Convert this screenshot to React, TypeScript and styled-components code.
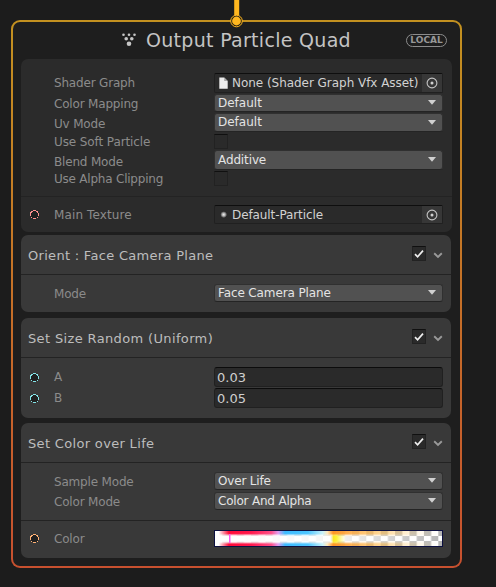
import React from "react";
import styled, { createGlobalStyle } from "styled-components";

const GlobalStyle = createGlobalStyle`
  *, *::before, *::after { box-sizing: border-box; }
  body {
    margin: 0;
    background: #1c1c1c;
    font-family: "DejaVu Sans", Verdana, sans-serif;
    overflow: hidden;
  }
`;

const Canvas = styled.main`
  position: relative;
  width: 496px;
  height: 587px;
  padding: 20px 0 0 11px;
  background: #1c1c1c;
`;

const Node = styled.section`
  width: 451px;
  height: 548px;
  padding: 0 8px;
  border: 2px solid transparent;
  border-radius: 9px;
  background:
    linear-gradient(#1e1e1e, #1e1e1e) padding-box,
    linear-gradient(#c39120, #c7502f) border-box;
`;

const FlowAnchor = styled.svg`
  position: absolute;
  left: 228px;
  top: 0;
`;

const TitleBar = styled.header`
  display: flex;
  align-items: center;
  height: 37px;
  padding: 0 0 1px 100px;
`;

const Title = styled.h1`
  flex: 1;
  margin: 0 0 1px 9px;
  font-size: 19px;
  line-height: 24px;
  font-weight: 400;
  letter-spacing: 0.3px;
  color: #c4c4c4;
  white-space: nowrap;
`;

const SpaceBadge = styled.span`
  width: 41px;
  height: 13px;
  margin-right: 5px;
  border: 1.5px solid #8c8c8c;
  border-radius: 7px;
  font-size: 9px;
  line-height: 11px;
  font-weight: 700;
  text-align: center;
  color: #979797;
`;

const Panel = styled.div<{ $h: number; $gap?: number; $settings?: boolean }>`
  height: ${(p) => p.$h}px;
  width: ${(p) => (p.$settings ? 431 : 430)}px;
  margin-bottom: ${(p) => p.$gap ?? 0}px;
  padding-top: ${(p) => (p.$settings ? 14 : 0)}px;
  border-radius: 7px;
  background: ${(p) => (p.$settings ? "#2b2b2b" : "#393939")};
`;

const BlockHeader = styled.div`
  display: flex;
  align-items: center;
  height: 39px;
  padding: 0 8px 0 7px;
`;

const BlockTitle = styled.h2<{ $ls: number }>`
  flex: 1;
  margin: 2px 0 0;
  font-size: 13px;
  line-height: 18px;
  font-weight: 400;
  letter-spacing: ${(p) => p.$ls}px;
  color: #bdbdbd;
  white-space: nowrap;
`;

const Divider = styled.hr<{ $mt?: number }>`
  height: 1px;
  margin: ${(p) => p.$mt ?? 0}px 0 0;
  border: 0;
  background: #232323;
`;

const Row = styled.div<{ $h: number; $mt?: number }>`
  display: grid;
  grid-template-columns: 33px 160px 229px;
  height: ${(p) => p.$h}px;
  margin-top: ${(p) => p.$mt ?? 0}px;
`;

const PortCell = styled.div`
  display: flex;
  align-items: center;
  padding-left: 8px;
`;

const Label = styled.span<{ $dy?: number; $ls?: number }>`
  align-self: center;
  height: 16px;
  margin-top: ${(p) => (p.$dy ?? 0) * 2}px;
  font-size: 12px;
  line-height: 16px;
  letter-spacing: ${(p) => p.$ls ?? -0.18}px;
  color: #8b8b8b;
  white-space: nowrap;
`;

const Dropdown = styled.div<{ $ls: number }>`
  display: flex;
  align-items: center;
  justify-content: space-between;
  padding: 0 6px 1px 3px;
  border: 1px solid #303030;
  border-bottom-color: #242424;
  border-radius: 3px;
  background: #515151;
  font-size: 12px;
  line-height: 14px;
  letter-spacing: ${(p) => p.$ls}px;
  color: #e4e4e4;
  white-space: nowrap;
`;

const ObjectBox = styled.div<{ $ls: number }>`
  display: flex;
  align-items: center;
  border: 1px solid #202020;
  border-top-color: #0e0e0e;
  border-radius: 2px;
  background: #2a2a2a;
  font-size: 12px;
  letter-spacing: ${(p) => p.$ls}px;
  color: #d2d2d2;
  white-space: nowrap;
  & > svg:first-child { flex: none; margin: 0 4px 0 4px; }
`;

const Picker = styled.span`
  display: flex;
  align-items: center;
  justify-content: center;
  width: 20px;
  height: 100%;
  margin-left: auto;
  background: #373737;
`;

const NumberInput = styled.div`
  padding: 2px 3px 0 2px;
  border: 1px solid #202020;
  border-top-color: #0c0c0c;
  border-radius: 3px;
  background: #2a2a2a;
  font-size: 13px;
  line-height: 16px;
  letter-spacing: 0.05px;
  color: #cfcfcf;
`;

const CheckBox = styled.span<{ $header?: boolean }>`
  display: flex;
  align-items: center;
  justify-content: center;
  width: 14px;
  height: 15px;
  margin-bottom: ${(p) => (p.$header ? 2 : 0)}px;
  border: 1px solid #222;
  border-top-color: #101010;
  background: #2a2a2a;
`;

const Chevron = styled.svg`
  margin-left: 7px;
  margin-top: 2px;
`;

const Port = ({ color }: { color: string }) => (
  <svg width="11" height="11" viewBox="0 0 11 11" shapeRendering="crispEdges">
    <circle cx="5.5" cy="5.5" r="4" fill="#202020" stroke={color} strokeWidth="1" />
  </svg>
);

const Arrow = () => (
  <svg width="8" height="5" viewBox="0 0 8 5">
    <path d="M0 0H8L4 4.8Z" fill="#d0d0d0" />
  </svg>
);

const Target = () => (
  <svg width="12" height="12" viewBox="0 0 12 12">
    <circle cx="6" cy="6" r="4.9" fill="none" stroke="#c4c4c4" strokeWidth="1.1" />
    <circle cx="6" cy="6" r="1.5" fill="#d0d0d0" />
  </svg>
);

const FileIcon = () => (
  <svg width="9" height="12" viewBox="0 0 9 12">
    <path d="M.3.5H5.2L8.7 4V11.7H.3Z" fill="#ececec" />
    <path d="M5.2.5V4H8.7Z" fill="#a8a8a8" />
  </svg>
);

const GlowIcon = () => (
  <svg width="9" height="12" viewBox="0 0 9 12">
    <defs>
      <radialGradient id="glow">
        <stop offset="0" stopColor="#f0f0f0" />
        <stop offset=".45" stopColor="#b0b0b0" />
        <stop offset="1" stopColor="#2a2a2a" />
      </radialGradient>
    </defs>
    <circle cx="4.7" cy="5.6" r="3.4" fill="url(#glow)" />
  </svg>
);

const ParticlesIcon = () => (
  <svg width="16" height="16" viewBox="0 0 16 16" fill="#c6c6c6">
    <circle cx="2.5" cy="2.8" r="1.3" />
    <circle cx="8" cy="2.8" r="1.3" />
    <circle cx="13.5" cy="2.8" r="1.3" />
    <circle cx="5.2" cy="6.8" r="1.8" />
    <circle cx="10.8" cy="6.8" r="1.8" />
    <circle cx="8" cy="11.8" r="2.3" />
  </svg>
);

const GradientField = () => (
  <svg width="229" height="17" viewBox="0 0 229 17">
    <defs>
      <pattern id="checker" x="-6.1" y="1" width="14.4" height="10" patternUnits="userSpaceOnUse">
        <rect width="14.4" height="10" fill="#fff" />
        <rect width="7.2" height="5" fill="#b4b4b4" />
        <rect x="7.2" y="5" width="7.2" height="5" fill="#b4b4b4" />
      </pattern>
      <linearGradient id="hue" gradientUnits="userSpaceOnUse" x1="0" y1="0" x2="229" y2="0">
        <stop offset="0" stopColor="#fff" />
        <stop offset=".02" stopColor="#fff" />
        <stop offset=".065" stopColor="#ff0a38" />
        <stop offset=".16" stopColor="#ff174c" />
        <stop offset=".25" stopColor="#ff4e88" />
        <stop offset=".28" stopColor="#e29cf0" />
        <stop offset=".31" stopColor="#3dbbff" />
        <stop offset=".41" stopColor="#4cc5ff" />
        <stop offset=".475" stopColor="#c9f2fa" />
        <stop offset=".495" stopColor="#ffe8bd" />
        <stop offset=".52" stopColor="#ff9526" />
        <stop offset=".6" stopColor="#ffac45" stopOpacity=".9" />
        <stop offset=".75" stopColor="#ffc45e" stopOpacity=".6" />
        <stop offset="1" stopColor="#fff3cf" stopOpacity="0" />
      </linearGradient>
      <linearGradient id="core" gradientUnits="userSpaceOnUse" x1="0" y1="0" x2="229" y2="0">
        <stop offset="0" stopColor="#fff" />
        <stop offset=".25" stopColor="#fff" stopOpacity=".95" />
        <stop offset=".51" stopColor="#fff" stopOpacity=".86" />
        <stop offset=".522" stopColor="#ffe822" />
        <stop offset=".535" stopColor="#fff238" />
        <stop offset=".575" stopColor="#fff" stopOpacity=".78" />
        <stop offset="1" stopColor="#fff" stopOpacity="0" />
      </linearGradient>
      <linearGradient id="band" x1="0" y1="0" x2="0" y2="1">
        <stop offset="0" stopColor="#fff" />
        <stop offset=".24" stopColor="#fff" />
        <stop offset=".4" stopColor="#000" />
        <stop offset=".64" stopColor="#000" />
        <stop offset=".8" stopColor="#fff" />
      </linearGradient>
      <linearGradient id="coreBand" x1="0" y1="0" x2="0" y2="1">
        <stop offset=".2" stopColor="#000" />
        <stop offset=".38" stopColor="#fff" />
        <stop offset=".66" stopColor="#fff" />
        <stop offset=".84" stopColor="#000" />
      </linearGradient>
      <mask id="edges"><rect width="229" height="17" fill="url(#band)" /></mask>
      <mask id="middle"><rect width="229" height="17" fill="url(#coreBand)" /></mask>
    </defs>
    <rect width="229" height="17" fill="url(#checker)" />
    <rect width="229" height="17" fill="url(#hue)" mask="url(#edges)" />
    <rect width="229" height="17" fill="url(#core)" mask="url(#middle)" />
    <rect x="15" y="4" width="1.5" height="9" fill="#ff5cf2" />
    <rect x=".5" y=".5" width="228" height="16" fill="none" stroke="#0c1040" />
  </svg>
);

const Block = ({ title, ls, h, gap, children }: {
  title: string; ls: number; h: number; gap?: number; children: React.ReactNode;
}) => (
  <Panel $h={h} $gap={gap}>
    <BlockHeader>
      <BlockTitle $ls={ls}>{title}</BlockTitle>
      <CheckBox $header>
        <svg width="10" height="10" viewBox="0 0 10 10">
          <path d="M1 5.2 3.6 7.8 9 1.6" fill="none" stroke="#efefef" strokeWidth="1.7" />
        </svg>
      </CheckBox>
      <Chevron width="10" height="7" viewBox="0 0 10 7">
        <path d="M1.2 1.3 5 4.9 8.8 1.3" fill="none" stroke="#999" strokeWidth="1.9" />
      </Chevron>
    </BlockHeader>
    <Divider />
    {children}
  </Panel>
);

const Property = ({ label, h, mt, dy, ls, port, children }: {
  label: string; h: number; mt?: number; dy?: number; ls?: number; port?: string; children: React.ReactNode;
}) => (
  <Row $h={h} $mt={mt}>
    <PortCell>{port && <Port color={port} />}</PortCell>
    <Label $dy={dy} $ls={ls}>{label}</Label>
    {children}
  </Row>
);

const Select = ({ value, ls = 0 }: { value: string; ls?: number }) => (
  <Dropdown $ls={ls}>{value}<Arrow /></Dropdown>
);

export default function App() {
  return (
    <Canvas>
      <GlobalStyle />
      <Node>
        <TitleBar>
          <ParticlesIcon />
          <Title>Output Particle Quad</Title>
          <SpaceBadge>LOCAL</SpaceBadge>
        </TitleBar>

        <Panel $settings $h={173} $gap={3}>
          <Property label="Shader Graph" h={20}>
            <ObjectBox $ls={-0.04}><FileIcon />None (Shader Graph Vfx Asset)<Picker><Target /></Picker></ObjectBox>
          </Property>
          <Property label="Color Mapping" h={17} mt={1} dy={1}><Select value="Default" /></Property>
          <Property label="Uv Mode" h={17} mt={2} dy={1.5}><Select value="Default" /></Property>
          <Property label="Use Soft Particle" h={15} mt={4} ls={-0.1}><CheckBox /></Property>
          <Property label="Blend Mode" h={17} mt={1} dy={2}><Select value="Additive" ls={-0.12} /></Property>
          <Property label="Use Alpha Clipping" h={15} mt={4} ls={-0.22}><CheckBox /></Property>
          <Divider $mt={10} />
          <Property label="Main Texture" h={19} mt={8} ls={0.12} port="#ff8f8f">
            <ObjectBox $ls={-0.1}><GlowIcon />Default-Particle<Picker><Target /></Picker></ObjectBox>
          </Property>
        </Panel>

        <Block title="Orient : Face Camera Plane" ls={0.3} h={77} gap={6}>
          <Property label="Mode" h={17} mt={9} dy={1}><Select value="Face Camera Plane" ls={-0.12} /></Property>
        </Block>

        <Block title="Set Size Random (Uniform)" ls={0.36} h={100} gap={5}>
          <Property label="A" h={19} mt={9} port="#84e4e7"><NumberInput>0.03</NumberInput></Property>
          <Property label="B" h={20} mt={2} port="#84e4e7"><NumberInput>0.05</NumberInput></Property>
        </Block>

        <Block title="Set Color over Life" ls={0.33} h={135}>
          <Property label="Sample Mode" h={18} mt={9} dy={1}><Select value="Over Life" ls={-0.18} /></Property>
          <Property label="Color Mode" h={17} mt={2} dy={1}><Select value="Color And Alpha" ls={-0.2} /></Property>
          <Divider $mt={11} />
          <Property label="Color" h={17} mt={9} port="#ffb175"><GradientField /></Property>
        </Block>
      </Node>

      <FlowAnchor width="17" height="30" viewBox="0 0 17 30">
        <path d="M8.7 0V17" stroke="#ffb71f" strokeWidth="5" />
        <circle cx="8.5" cy="21" r="5.8" fill="#201c14" stroke="#ffb71f" strokeWidth="1" />
        <circle cx="8.5" cy="21" r="4.4" fill="#ffb71f" />
      </FlowAnchor>
    </Canvas>
  );
}
